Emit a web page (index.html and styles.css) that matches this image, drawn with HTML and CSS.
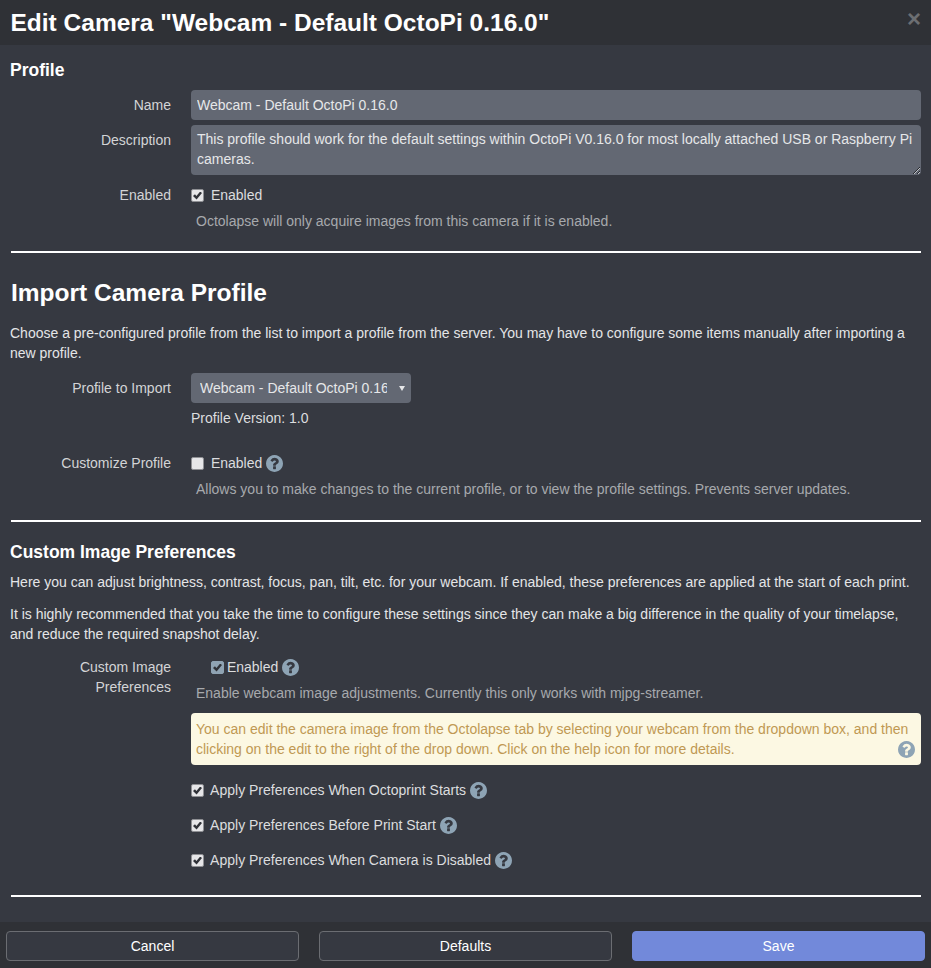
FILE: index.html
```html
<!DOCTYPE html>
<html lang="en">
<head>
<meta charset="utf-8">
<title>Edit Camera</title>
<link rel="stylesheet" href="styles.css">
</head>
<body>
<svg class="sprite" aria-hidden="true"><symbol id="q" viewBox="0 128 1536 1536"><path fill-rule="evenodd" d="M768 128q209 0 385.500 103t279.500 279.500 103 385.500-103 385.500-279.500 279.500-385.500 103-385.500-103-279.500-279.500-103-385.500 103-385.500 279.500-279.500 385.500-103zM896 1376v-192q0-14-9-23t-23-9H672q-14 0-23 9t-9 23v192q0 14 9 23t23 9h192q14 0 23-9t9-23zM1152 704q0-88-55.500-163T958 425t-170-41q-243 0-371 213-15 24 8 42l132 100q7 6 19 6 16 0 25-12 53-68 86-92 34-24 86-24 48 0 85.500 26t37.500 59q0 38-20 61t-68 45q-63 28-115.500 86.500T640 1020v36q0 14 9 23t23 9h192q14 0 23-9t9-23q0-19 21.500-49.500T972 957q32-18 49-28.500t46-35 44.500-48 28-60.500 12.500-81z"/></symbol></svg>
<div class="modal">
  <header class="modal-head">
    <h1>Edit Camera "Webcam - Default OctoPi 0.16.0"</h1>
    <button class="close" type="button">×</button>
  </header>
  <main class="modal-body">
    <h4 class="h-first">Profile</h4>
    <div class="row row-input">
      <label class="lbl lbl-input">Name</label>
      <input class="field" type="text" value="Webcam - Default OctoPi 0.16.0">
    </div>
    <div class="row row-area">
      <label class="lbl lbl-input">Description</label>
      <textarea class="field area">This profile should work for the default settings within OctoPi V0.16.0 for most locally attached USB or Raspberry Pi cameras.</textarea>
    </div>
    <div class="row row-check">
      <span class="lbl">Enabled</span>
      <div>
        <label class="check"><input type="checkbox" checked> Enabled</label>
        <p class="help">Octolapse will only acquire images from this camera if it is enabled.</p>
      </div>
    </div>
    <hr class="rule rule-1">
    <h3>Import Camera Profile</h3>
    <p class="para">Choose a pre-configured profile from the list to import a profile from the server. You may have to configure some items manually after importing a new profile.</p>
    <div class="row row-select">
      <label class="lbl lbl-input">Profile to Import</label>
      <div>
        <div class="picker-wrap"><select class="picker"><option>Webcam - Default OctoPi 0.16.0</option></select></div>
        <div class="version">Profile Version: 1.0</div>
      </div>
    </div>
    <div class="row row-custom">
      <span class="lbl">Customize Profile</span>
      <div>
        <label class="check"><input type="checkbox"> Enabled <svg class="q"><use href="#q"/></svg></label>
        <p class="help">Allows you to make changes to the current profile, or to view the profile settings. Prevents server updates.</p>
      </div>
    </div>
    <hr class="rule rule-2">
    <h4 class="h-pref">Custom Image Preferences</h4>
    <p class="para para-a">Here you can adjust brightness, contrast, focus, pan, tilt, etc. for your webcam. If enabled, these preferences are applied at the start of each print.</p>
    <p class="para para-b">It is highly recommended that you take the time to configure these settings since they can make a big difference in the quality of your timelapse, and reduce the required snapshot delay.</p>
    <div class="row row-pref">
      <span class="lbl">Custom Image Preferences</span>
      <div>
        <label class="check check-in"><input class="muted" type="checkbox" checked> Enabled <svg class="q"><use href="#q"/></svg></label>
        <p class="help">Enable webcam image adjustments. Currently this only works with mjpg-streamer.</p>
        <div class="alert">You can edit the camera image from the Octolapse tab by selecting your webcam from the dropdown box, and then clicking on the edit to the right of the drop down. Click on the help icon for more details.<svg class="q q-alert"><use href="#q"/></svg></div>
        <label class="check apply"><input type="checkbox" checked> Apply Preferences When Octoprint Starts <svg class="q"><use href="#q"/></svg></label>
        <label class="check apply"><input type="checkbox" checked> Apply Preferences Before Print Start <svg class="q"><use href="#q"/></svg></label>
        <label class="check apply"><input type="checkbox" checked> Apply Preferences When Camera is Disabled <svg class="q"><use href="#q"/></svg></label>
      </div>
    </div>
    <hr class="rule rule-3">
  </main>
  <footer class="modal-foot">
    <button class="btn" type="button">Cancel</button>
    <button class="btn" type="button">Defaults</button>
    <button class="btn btn-save" type="button">Save</button>
  </footer>
</div>
</body>
</html>
```
FILE: styles.css
```css
* { box-sizing: border-box; }
html, body { margin: 0; padding: 0; height: 100%; overflow: hidden; }
body {
  font-family: "Liberation Sans", Arial, sans-serif;
  font-size: 14px;
  line-height: 20px;
  color: #dcdddf;
  background: #363941;
}
.sprite { display: none; }
.modal { height: 968px; display: flex; flex-direction: column; }
.modal-head {
  height: 45px;
  flex: none;
  background: #2f3136;
  display: flex;
  justify-content: space-between;
  padding: 0 10px;
}
h1 { margin: 5px 0 0 0.5px; font-size: 24.5px; line-height: 35px; font-weight: 700; color: #fff; }
.close {
  border: 0; padding: 0; background: none; height: 20px; margin-top: 9px;
  font: 700 24px/20px "Liberation Sans", Arial, sans-serif;
  color: #6c6e72;
}
.modal-body { flex: 1; min-height: 0; overflow: hidden; padding: 0 10px; }
h4 { margin: 0; font-size: 17.5px; line-height: 20px; font-weight: 700; color: #fff; }
h3 { margin: 20px 0 0 1px; font-size: 24.5px; line-height: 40px; font-weight: 700; color: #fff; }
.h-first { margin-top: 15px; }
.h-pref { margin-top: 20px; }
.para { margin: 10px 0 0; color: #e4e5e7; }
.para-a { margin-top: 10px; }
.para-b { margin-top: 12px; }
.row { display: grid; grid-template-columns: 161px 1fr; column-gap: 20px; }
.lbl { text-align: right; color: #d3d4d6; }
.lbl-input { padding-top: 5px; }
.row-input { margin-top: 10px; }
.row-area { margin-top: 5px; }
.row-check { margin-top: 10px; }
.row-select { margin-top: 10px; }
.row-custom { margin-top: 25px; }
.row-pref { margin-top: 13px; }
.field {
  display: block;
  width: 100%;
  height: 30px;
  margin: 0;
  padding: 4px 6px;
  border: 0;
  border-radius: 4px;
  background: #636873;
  color: #e6e7e9;
  font: 14px/20px "Liberation Sans", Arial, sans-serif;
  outline: 0;
}
.area { height: 50px; resize: vertical; overflow: hidden; }
.picker-wrap { position: relative; width: 220px; }
.picker-wrap::after {
  content: "";
  position: absolute;
  right: 6px;
  top: 13px;
  border-left: 3px solid transparent;
  border-right: 3px solid transparent;
  border-top: 5px solid #e6e7e9;
  pointer-events: none;
}
.picker {
  display: block;
  appearance: none;
  width: 220px;
  height: 30px;
  padding: 4px 24px 4px 9px;
  border: 0;
  border-radius: 4px;
  background-color: #636873;
  color: #e6e7e9;
  font: 14px/20px "Liberation Sans", Arial, sans-serif;
}
.version { margin-top: 5px; }
.check { display: block; color: #dcdddf; }
.check input {
  appearance: none;
  display: inline-block;
  position: relative;
  width: 13px;
  height: 13px;
  margin: 0 3px 0 0;
  vertical-align: -2px;
  background: #e6e6e8;
  border: 1px solid #8f9094;
  border-radius: 2px;
}
.check input:checked::before {
  content: "";
  position: absolute;
  left: 1px;
  top: 1.5px;
  width: 9px;
  height: 8px;
  background: #303238;
  clip-path: polygon(0 55%, 22% 33%, 38% 55%, 80% 0, 100% 18%, 40% 100%);
}
.check input.muted { background: #8fa3b3; border-color: #8fa3b3; }
.check-in { padding-left: 20px; }
.check-in input { margin-right: -1px; }
.help { margin: 6px 0 0 5px; color: #a7a9ad; }
.q { width: 17px; height: 17px; fill: #8ea4b5; vertical-align: -4px; }
.alert {
  position: relative;
  margin-top: 10px;
  height: 52px;
  padding: 6px 5px;
  border-radius: 4px;
  background: #fcf8e3;
  color: #c09853;
}
.q-alert { position: absolute; right: 6px; bottom: 7px; }
.apply { margin-top: 15px; }
.rule { height: 2px; border: 0; margin: 0 0 0 1px; background: #fff; }
.rule-1 { margin-top: 20px; }
.rule-2 { margin-top: 21px; }
.rule-3 { margin-top: 25px; }
.modal-foot {
  height: 46px;
  flex: none;
  background: #2f3136;
  display: grid;
  grid-template-columns: repeat(3, 1fr);
  column-gap: 20px;
  padding: 9px 6px 7px;
}
.btn {
  border: 1px solid #6b6d72;
  border-radius: 4px;
  background: #363941;
  color: #fff;
  font: 14px/20px "Liberation Sans", Arial, sans-serif;
  padding: 0;
}
.btn-save { background: #7289da; border-color: #7289da; }
```
